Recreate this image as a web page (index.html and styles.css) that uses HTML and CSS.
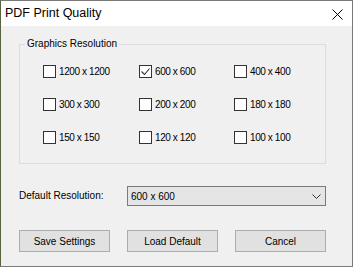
FILE: index.html
```html
<!DOCTYPE html>
<html lang="en">
<head>
    <meta charset="UTF-8">
    <title>PDF Print Quality</title>

    <link rel="stylesheet" href="styles.css">
</head>
<body>
<div class="window">
    <div class="titlebar">
        <span class="title">PDF Print Quality</span>
        <svg class="close" width="11" height="11" viewBox="0 0 11 11">
            <path d="M0.5 0.5 L10.5 10.5 M10.5 0.5 L0.5 10.5" stroke="#000" stroke-width="1" fill="none"/>
        </svg>
    </div>
    <div class="content">
        <fieldset class="group">
            <legend>Graphics Resolution</legend>
            <div class="options">
                <label class="option"><span class="box"></span>1200 x 1200</label>
                <label class="option"><span class="box checked">
                    <svg width="11" height="11" viewBox="0 0 11 11">
                        <path d="M1.5 5.5 L4.5 8.5 L9.5 2.5" stroke="#333" stroke-width="1.1" fill="none"/>
                    </svg>
                </span>600 x 600</label>
                <label class="option"><span class="box"></span>400 x 400</label>
                <label class="option"><span class="box"></span>300 x 300</label>
                <label class="option"><span class="box"></span>200 x 200</label>
                <label class="option"><span class="box"></span>180 x 180</label>
                <label class="option"><span class="box"></span>150 x 150</label>
                <label class="option"><span class="box"></span>120 x 120</label>
                <label class="option"><span class="box"></span>100 x 100</label>
            </div>
        </fieldset>

        <div class="field">
            <span class="field-label">Default Resolution:</span>
            <div class="select">
                <span>600 x 600</span>
                <svg width="9" height="5" viewBox="0 0 9 5">
                    <path d="M0.5 0.5 L4.5 4.5 L8.5 0.5" stroke="#333" stroke-width="1" fill="none"/>
                </svg>
            </div>
        </div>

        <div class="buttons">
            <button class="btn">Save Settings</button>
            <button class="btn">Load Default</button>
            <button class="btn">Cancel</button>
        </div>
    </div>
</div>
</body>
</html>
```

FILE: styles.css
```css
html, body {
    margin: 0;
    padding: 0;
}

body {
    width: 353px;
    height: 267px;
    font-family: "Liberation Sans", Arial, sans-serif;
    font-size: 10px;
    color: #000;
}

.window {
    box-sizing: border-box;
    width: 353px;
    height: 267px;
    border: 1px solid #7a7a7a;
    border-left-color: #56633f;
    background-color: #f0f0f0;
}

.titlebar {
    display: flex;
    justify-content: space-between;
    align-items: center;
    height: 25px;
    background-color: white;
}

.title {
    padding-left: 4px;
    font-size: 12.5px;
    line-height: 25px;
}

.close {
    margin-right: 9px;
    margin-top: 1px;
}

.content {
    padding: 0 26px 0 18px;
}

/*Группа*/

.group {
    margin: 12px 0 0 0;
    padding: 15px 0 19px 5px;
    min-width: 0;
    border: 1px solid #dcdcdc;
}

.group legend {
    padding: 0 2px;
    line-height: 12px;
}

.options {
    display: grid;
    grid-template-columns: 96px 95px 1fr;
    row-gap: 20px;
    padding-left: 18px;
}

.option {
    display: flex;
    align-items: center;
    height: 13px;
    line-height: 13px;
    letter-spacing: -0.4px;
}

.box {
    box-sizing: border-box;
    display: inline-flex;
    align-items: center;
    justify-content: center;
    width: 13px;
    height: 13px;
    margin-right: 3px;
    border: 1px solid #333;
    background-color: white;
}

/*Поле выбора*/

.field {
    display: flex;
    align-items: center;
    margin-top: 22px;
}

.field-label {
    width: 108px;
    margin-top: -2px;
}

.select {
    box-sizing: border-box;
    display: flex;
    justify-content: space-between;
    align-items: center;
    width: 199px;
    height: 20px;
    padding: 1px 4px 0 3px;
    border: 1px solid #7a7a7a;
    background-color: #e5e5e5;
}

/*Кнопки*/

.buttons {
    display: flex;
    gap: 17px;
    margin-top: 24px;
}

.btn {
    box-sizing: border-box;
    width: 91px;
    height: 22px;
    padding: 0;
    border: 1px solid #adadad;
    background-color: #e1e1e1;
    font-family: inherit;
    font-size: 10px;
    color: #000;
}
```
